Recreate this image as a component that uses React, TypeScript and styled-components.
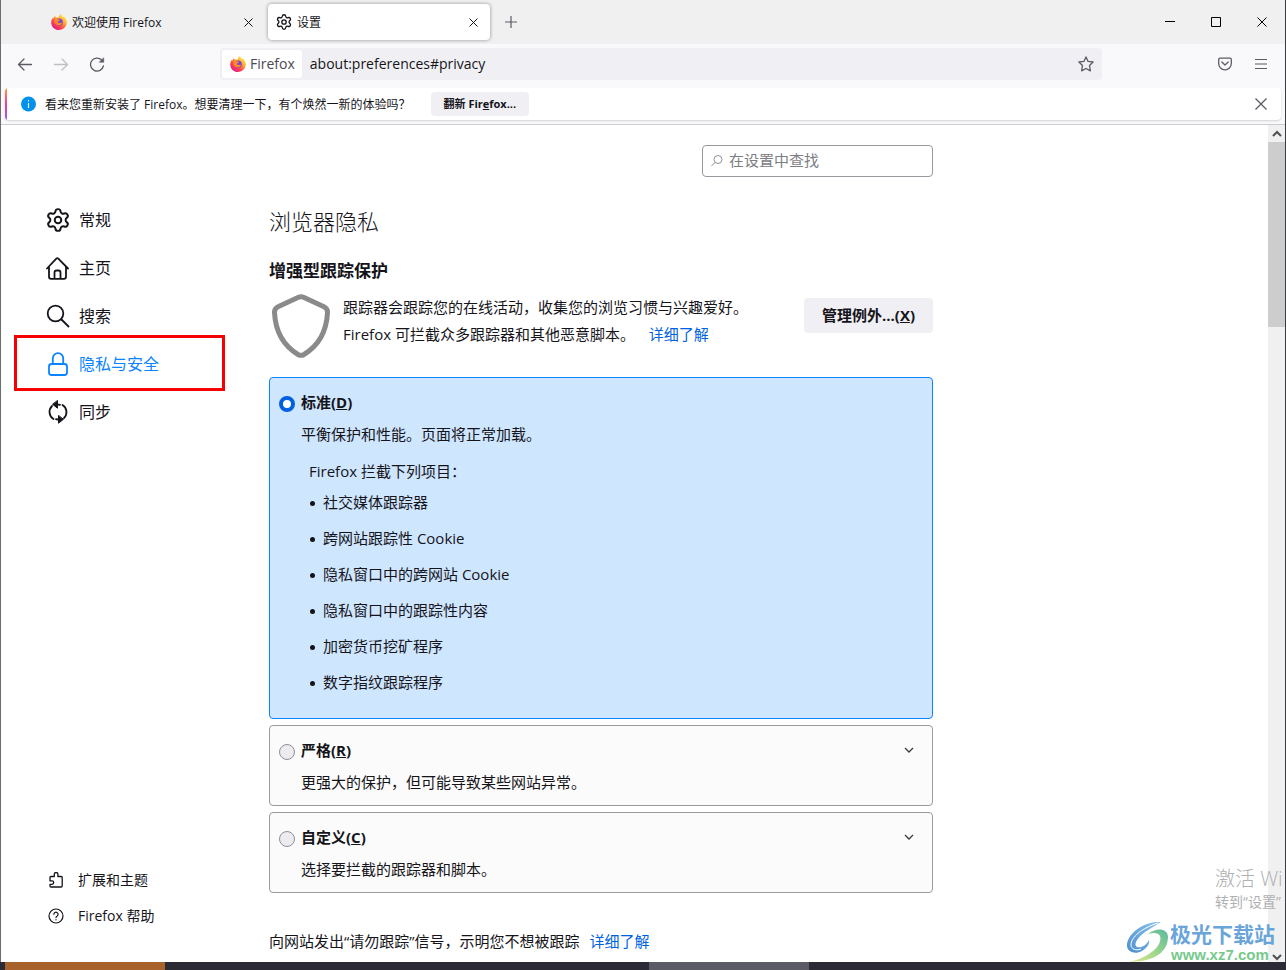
import React from "react";
import styled, { createGlobalStyle, css } from "styled-components";

const GlobalStyle = createGlobalStyle`
  * { box-sizing: border-box; }
  body {
    margin: 0;
    background: #2b2b36;
    color: #15141a;
    font-family: "Open Sans", "Noto Sans CJK SC", sans-serif;
    font-size: 15px;
  }
  button, input { font: inherit; color: inherit; }
  h1, h2, p, ul { margin: 0; padding: 0; }
`;

const Desktop = styled.div`
  min-height: 100vh;
  display: flex;
  flex-direction: column;
  position: relative;
  overflow: hidden;
`;

const Window = styled.div`
  flex: 1;
  display: flex;
  flex-direction: column;
  background: #fff;
  border-left: 1px solid #6d6d70;
  border-right: 1px solid #3a3b44;
`;

const Taskbar = styled.div`
  height: 8px;
  display: flex;
  padding-left: 5px;
  background: #2b2b36;
`;

const TaskbarItem = styled.div<{ $color: string; $gap?: boolean }>`
  width: 160px;
  background: ${(p) => p.$color};
  margin-left: ${(p) => (p.$gap ? "484px" : "0")};
`;

const IconButton = styled.button<{ $w?: number; $dim?: boolean }>`
  width: ${(p) => p.$w ?? 36}px;
  height: 32px;
  padding: 0;
  border: 0;
  background: none;
  display: flex;
  align-items: center;
  justify-content: center;
  color: ${(p) => (p.$dim ? "#bfbfc4" : "#5b5b66")};
`;

const TabStrip = styled.div`
  height: 44px;
  display: flex;
  align-items: center;
  background: #f0f0f0;
  padding-left: 42px;
`;

const Tab = styled.div<{ $active?: boolean }>`
  width: 222px;
  height: 36px;
  margin-right: 3px;
  padding: 0 0 0 8px;
  display: flex;
  align-items: center;
  gap: 5px;
  border-radius: 4px;
  font-size: 12px;
  ${(p) =>
    p.$active &&
    css`
      background: #fff;
      box-shadow: 0 0 3px 1px #b4b4bc;
    `}
`;

const TabTitle = styled.span`
  flex: 1;
  white-space: nowrap;
`;

const TabClose = styled(IconButton)`
  width: 34px;
  color: #15141a;
`;

const Fill = styled.div`
  flex: 1;
`;

const WindowButton = styled(IconButton)`
  width: 46px;
  color: #000;
`;

const NavBar = styled.div`
  height: 40px;
  display: flex;
  align-items: center;
  background: #f9f9fb;
  padding: 0 6px;
`;

const Spacer = styled.div`
  flex: 0 1 105px;
`;

const UrlBar = styled.div`
  flex: 1;
  height: 32px;
  display: flex;
  align-items: center;
  gap: 8px;
  padding-left: 2px;
  border-radius: 4px;
  background: #f0f0f4;
`;

const Identity = styled.div`
  height: 28px;
  display: flex;
  align-items: center;
  gap: 4px;
  padding: 0 7px 0 8px;
  border-radius: 3px;
  background: #fff;
  color: #4a4a52;
  font-size: 14px;
  line-height: 26px;
`;

const UrlInput = styled.input`
  flex: 1;
  min-width: 0;
  border: 0;
  padding: 0 0 2px;
  background: none;
  outline: 0;
  font-size: 14px;
`;

const NoticeArea = styled.div`
  background: #f9f9fb;
  border-bottom: 1px solid #cccccf;
  padding: 4px;
`;

const Notice = styled.div`
  height: 32px;
  display: flex;
  align-items: center;
  gap: 8px;
  padding: 0 2px 0 15px;
  background: linear-gradient(#ff9640, #e8409a 50%, #9059ff) left / 2px 100% no-repeat #fff;
  border-radius: 4px;
  box-shadow: 0 1px 2px rgba(58, 57, 68, 0.2);
  font-size: 12px;
`;

const NoticeButton = styled.button`
  height: 24px;
  margin-left: 12px;
  padding: 0 13px 2px;
  border: 0;
  border-radius: 4px;
  background: #f0f0f4;
  font-size: 11px;
  font-weight: 700;
`;

const Body = styled.div`
  flex: 1;
  display: flex;
`;

const Sidebar = styled.aside`
  width: 268px;
  flex: none;
  padding: 71px 44px 28px 34px;
  display: flex;
  flex-direction: column;
  justify-content: space-between;
`;

const SideLink = styled.a`
  display: flex;
  align-items: center;
  padding-bottom: 2px;
  text-decoration: none;
  color: #15141a;
  & > svg { margin-top: 2px; }
`;

const NavLink = styled(SideLink)<{ $current?: boolean }>`
  position: relative;
  height: 48px;
  padding-left: 11px;
  gap: 9px;
  font-size: 16px;
  ${(p) => p.$current && "color: #0a84ff;"}
`;

const Highlight = styled.span`
  position: absolute;
  inset: -5px 0 -3px -21px;
  border: 3px solid #f60000;
`;

const FootLink = styled(SideLink)`
  height: 36px;
  padding-left: 13px;
  gap: 14px;
  font-size: 14px;
`;

const Main = styled.main`
  flex: 0 1 664px;
  padding: 20px 0 6px;
  display: flex;
  flex-direction: column;
`;

const SearchBox = styled.label`
  align-self: flex-end;
  width: 231px;
  height: 32px;
  display: flex;
  align-items: center;
  gap: 6px;
  padding: 0 8px;
  border: 1px solid #98989f;
  border-radius: 4px;
  color: #8f8f96;
`;

const SearchInput = styled.input`
  flex: 1;
  min-width: 0;
  padding: 0 0 2px;
  border: 0;
  outline: 0;
  background: none;
  &::placeholder { color: #7d7d84; opacity: 1; }
`;

const PageTitle = styled.h1`
  margin-top: 27px;
  font-size: 22px;
  line-height: 34px;
  font-weight: 300;
`;

const SectionTitle = styled.h2`
  margin-top: 20px;
  font-size: 17px;
  line-height: 26px;
  font-weight: 700;
`;

const Intro = styled.div`
  display: flex;
  align-items: flex-start;
  margin: 10px 0 19px;
`;

const IntroText = styled.p`
  flex: 1;
  margin-left: 10px;
  line-height: 27px;
`;

const Link = styled.a`
  margin-left: 10px;
  color: #0061e0;
  text-decoration: none;
`;

const ExceptionsButton = styled.button`
  height: 35px;
  margin-top: 4px;
  padding: 0 18px 2px;
  border: 0;
  border-radius: 4px;
  background: #f0f0f4;
  font-weight: 700;
`;

const Card = styled.section<{ $selected?: boolean }>`
  margin-bottom: 6px;
  padding: 9px 9px ${(p) => (p.$selected ? 19 : 8)}px;
  border: 1px solid ${(p) => (p.$selected ? "#0a84ff" : "#9a9aa0")};
  border-radius: 4px;
  background: ${(p) => (p.$selected ? "#cfe6ff" : "#fbfbfb")};
`;

const CardHead = styled.div`
  display: flex;
  align-items: center;
  height: 32px;
`;

const CardLabel = styled.label`
  flex: 1;
  display: flex;
  align-items: center;
  gap: 6px;
  font-weight: 700;
  line-height: 20px;
`;

const LabelText = styled.span`
  padding-bottom: 2px;
`;

const Radio = styled.input`
  appearance: none;
  width: 16px;
  height: 16px;
  margin: 2px 0 0;
  border: 1px solid #8f8f9d;
  border-radius: 50%;
  background: #ececee;
  &:checked { border: 4px solid #0061e0; background: #fff; }
`;

const CardText = styled.p`
  margin-left: 22px;
  line-height: 30px;
`;

const ListTitle = styled.p`
  margin: 9px 0 0 30px;
  line-height: 26px;
`;

const BlockList = styled.ul`
  margin: -1px 0 0 31px;
  list-style: none;
`;

const BlockItem = styled.li`
  height: 36px;
  display: flex;
  align-items: center;
  gap: 8px;
  &::before {
    content: "";
    width: 5px;
    height: 5px;
    margin-top: 4px;
    border-radius: 50%;
    background: #15141a;
  }
`;

const Expand = styled(IconButton)`
  width: 28px;
  height: 28px;
  margin-bottom: 2px;
  color: #3a3a42;
`;

const SignalText = styled.p`
  margin-top: 27px;
  line-height: 30px;
`;

const Scrollbar = styled.div`
  width: 17px;
  margin-left: auto;
  display: flex;
  flex-direction: column;
  align-items: center;
  background: #f0f0f0;
  color: #505050;
`;

const ScrollThumb = styled.div`
  width: 17px;
  height: 185px;
  margin-bottom: auto;
  background: #cdcdcd;
`;

const ScrollEnd = styled.div<{ $last?: boolean }>`
  height: 17px;
  display: flex;
  align-items: ${(p) => (p.$last ? "flex-end" : "center")};
`;

const Activation = styled.div`
  position: absolute;
  right: 1px;
  bottom: 59px;
  width: 70px;
  overflow: hidden;
  white-space: nowrap;
  color: #b0b0b2;
  font-size: 14px;
  line-height: 18px;
`;

const ActivationTitle = styled.div`
  font-size: 20px;
  line-height: 28px;
  font-weight: 300;
`;

const SiteMark = styled.div`
  position: absolute;
  right: 11px;
  bottom: 7px;
  display: flex;
  align-items: center;
  gap: 1px;
`;

const SiteName = styled.div`
  font-size: 21px;
  line-height: 26px;
  font-weight: 700;
  color: #6aa5da;
`;

const SiteUrl = styled.div`
  padding-left: 1px;
  font-family: "Liberation Sans", sans-serif;
  font-size: 15px;
  line-height: 16px;
  font-weight: 700;
  color: #76c98c;
`;

const FirefoxLogo = ({ id }: { id: string }) => (
  <svg width="16" height="16" viewBox="0 0 16 16" aria-hidden="true">
    <defs>
      <linearGradient id={id} x1="0.85" y1="0.1" x2="0.2" y2="0.95">
        <stop offset="0" stopColor="#fff04a" />
        <stop offset="0.35" stopColor="#ffa62e" />
        <stop offset="0.65" stopColor="#ff4a4b" />
        <stop offset="1" stopColor="#e31587" />
      </linearGradient>
    </defs>
    <path d="M10 0c.3 1.6 1.3 2.300 2.400 3.300l.5-.9c1.900 1.600 3 3.800 2.900 6.200C15.600 12.900 12.200 16 8 16S.2 12.800.2 8.400c0-1.900.8-3.700 1.700-4.700l.3 1C2.600 3.500 3.300 2.600 4.200 2l.4 1.700c1-.3 2-.2 2.900.2C7.700 2.200 8.700.8 10 0z" fill={`url(#${id})`} />
    <circle cx="8.200" cy="8.200" r="3.600" fill="#7b45d9" />
    <path d="M3.300 5.200c1.600-.8 3-.5 4.100.3 1 .1 1.500.2 1.800.6-.4.8-1.500.9-2.100 1.400-.3 1 .5 1.500 1.500 1.500 1.100 0 1.600-.4 2.400-.1-.6 1.700-1.700 2.400-3.400 2.400-2.800 0-4.900-2.700-4.300-6.100z" fill="#ff8a24" />
  </svg>
);

const GearIcon = ({ size }: { size: number }) => (
  <svg width={size} height={size} viewBox="1 1 22 22" fill="none" stroke="currentColor" strokeWidth="1.800" strokeLinejoin="round" aria-hidden="true">
    <path d="M9.671 4.136a2.340 2.340 0 0 1 4.659 0 2.340 2.340 0 0 0 3.319 1.915 2.340 2.340 0 0 1 2.330 4.033 2.340 2.340 0 0 0 0 3.831 2.340 2.340 0 0 1-2.330 4.033 2.340 2.340 0 0 0-3.319 1.915 2.340 2.340 0 0 1-4.659 0 2.340 2.340 0 0 0-3.320-1.915 2.340 2.340 0 0 1-2.330-4.033 2.340 2.340 0 0 0 0-3.831A2.340 2.340 0 0 1 6.350 6.051a2.340 2.340 0 0 0 3.319-1.915" />
    <circle cx="12" cy="12" r="3" />
  </svg>
);

const CrossIcon = ({ size, width = 1 }: { size: number; width?: number }) => (
  <svg width={size} height={size} viewBox={`0 0 ${size} ${size}`} stroke="currentColor" strokeWidth={width} aria-hidden="true">
    <path d={`M.5.5 ${size - 0.5} ${size - 0.5}M${size - 0.5} .5.5 ${size - 0.5}`} />
  </svg>
);

const ArrowIcon = ({ flip }: { flip?: boolean }) => (
  <svg width="16" height="16" viewBox="0 0 16 16" fill="none" stroke="currentColor" strokeWidth="1.300" strokeLinecap="round" strokeLinejoin="round" aria-hidden="true">
    {flip ? <path d="M1.500 8.500h13M9 3 14.500 8.500 9 14" /> : <path d="M14.500 8.500h-13M7 3 1.500 8.500 7 14" />}
  </svg>
);

const ChevronIcon = ({ up, width = 1.3 }: { up?: boolean; width?: number }) => (
  <svg width="10" height="10" viewBox="0 0 10 10" fill="none" stroke="currentColor" strokeWidth={width} aria-hidden="true">
    <path d={up ? "M1 7l4-4 4 4" : "M1 3l4 4 4-4"} />
  </svg>
);

const navIcon = { width: 24, height: 24, viewBox: "0 0 24 24", fill: "none", stroke: "currentColor", strokeWidth: 1.8, strokeLinecap: "round", strokeLinejoin: "round" } as const;

const HomeIcon = () => (
  <svg {...navIcon} aria-hidden="true">
    <path d="M1 12.500 10.300 2.600q1-1 2 0L22 12.500M3 11v9.800q0 2 2 2h13q2 0 2-2V11M8.500 22.500v-6q0-2 2-2h2q2 0 2 2v6" />
  </svg>
);

const SearchIcon = () => (
  <svg {...navIcon} aria-hidden="true">
    <circle cx="9.500" cy="9.500" r="7.800" />
    <path d="m15.500 15.500 7 7" />
  </svg>
);

const LockIcon = () => (
  <svg {...navIcon} aria-hidden="true">
    <rect x="3" y="12" width="18" height="11" rx="2.500" />
    <path d="M6.800 11.500V6.300a5.200 5.200 0 0 1 10.400 0v5.200" />
  </svg>
);

const SyncIcon = () => (
  <svg {...navIcon} aria-hidden="true">
    <path d="M6 6A8.300 8.300 0 0 0 7.500 19M16.500 5A8.300 8.300 0 0 1 18 18" />
    <path d="M11.500.8v7.400L6.800 4.500zM12.500 15.800v7.400l4.700-3.700z" fill="currentColor" strokeWidth="1" />
    <path d="M10.500 4.300q2 0 3.500.5M13.500 19.700q-2 0-3.500-.5" />
  </svg>
);

const links = [
  { label: "常规", icon: <GearIcon size={24} /> },
  { label: "主页", icon: <HomeIcon /> },
  { label: "搜索", icon: <SearchIcon /> },
  { label: "隐私与安全", icon: <LockIcon />, current: true },
  { label: "同步", icon: <SyncIcon /> },
];

const blocked = ["社交媒体跟踪器", "跨网站跟踪性 Cookie", "隐私窗口中的跨网站 Cookie", "隐私窗口中的跟踪性内容", "加密货币挖矿程序", "数字指纹跟踪程序"];

export default function App() {
  return (
    <Desktop>
      <GlobalStyle />
      <Window>
        <TabStrip>
          <Tab>
            <FirefoxLogo id="fx-tab" />
            <TabTitle>欢迎使用 Firefox</TabTitle>
            <TabClose aria-label="关闭标签页"><CrossIcon size={9} /></TabClose>
          </Tab>
          <Tab $active>
            <GearIcon size={16} />
            <TabTitle>设置</TabTitle>
            <TabClose aria-label="关闭标签页"><CrossIcon size={9} /></TabClose>
          </Tab>
          <IconButton aria-label="新建标签页">
            <svg width="12" height="12" viewBox="0 0 12 12" stroke="currentColor" strokeWidth="1.200"><path d="M6 0v12M0 6h12" /></svg>
          </IconButton>
          <Fill />
          <WindowButton aria-label="最小化">
            <svg width="10" height="10" viewBox="0 0 10 10"><path d="M0 4h10v1H0z" /></svg>
          </WindowButton>
          <WindowButton aria-label="最大化">
            <svg width="10" height="10" viewBox="0 0 10 10" fill="none" stroke="currentColor"><path d="M.5.5h9v9h-9z" /></svg>
          </WindowButton>
          <WindowButton aria-label="关闭"><CrossIcon size={10} /></WindowButton>
        </TabStrip>

        <NavBar>
          <IconButton aria-label="后退"><ArrowIcon /></IconButton>
          <IconButton $dim aria-label="前进"><ArrowIcon flip /></IconButton>
          <IconButton aria-label="刷新">
            <svg width="16" height="16" viewBox="0 0 16 16" fill="none" stroke="currentColor" strokeWidth="1.300" strokeLinecap="round"><path d="M14.400 10A6.500 6.500 0 1 1 12.500 3.800l1 1" /><path d="M14.700 2v4.200h-4.200z" fill="currentColor" strokeWidth=".6" strokeLinejoin="round" /></svg>
          </IconButton>
          <Spacer />
          <UrlBar>
            <Identity><FirefoxLogo id="fx-url" /><span>Firefox</span></Identity>
            <UrlInput aria-label="地址" defaultValue="about:preferences#privacy" />
            <IconButton $w={32} aria-label="收藏">
              <svg width="16" height="16" viewBox="0 0 16 16" fill="none" stroke="currentColor" strokeWidth="1.300" strokeLinejoin="round"><path d="m8 .9 2.100 4.500 5 .6-3.600 3.500.9 5.300L8 12.500l-4.400 2.300.9-5.300L.9 6l5-.6z" /></svg>
            </IconButton>
          </UrlBar>
          <Spacer />
          <IconButton aria-label="保存到 Pocket">
            <svg width="14" height="14" viewBox="0 0 14 14" fill="none" stroke="currentColor" strokeWidth="1.300" strokeLinecap="round" strokeLinejoin="round"><path d="M2 1.200h10q1.300 0 1.300 1.300v4a6.300 6.300 0 0 1-12.600 0v-4Q.7 1.200 2 1.200zM3.800 5 7 8l3.200-3" /></svg>
          </IconButton>
          <IconButton aria-label="菜单">
            <svg width="12" height="12" viewBox="0 0 12 12" stroke="currentColor" strokeWidth="1.200"><path d="M0 1.500h12M0 6h12M0 10.500h12" /></svg>
          </IconButton>
        </NavBar>

        <NoticeArea>
          <Notice>
            <svg width="17" height="16" viewBox="0 0 16 16" aria-hidden="true"><circle cx="8" cy="8" r="7.500" fill="#0090ed" /><path d="M7.400 7h1.200v5H7.400zM7.400 4.300h1.200v1.300H7.400z" fill="#fff" /></svg>
            <span>看来您重新安装了 Firefox。想要清理一下，有个焕然一新的体验吗？</span>
            <NoticeButton>翻新 Fir<u>e</u>fox...</NoticeButton>
            <Fill />
            <IconButton aria-label="关闭通知"><CrossIcon size={12} width={1.3} /></IconButton>
          </Notice>
        </NoticeArea>

        <Body>
          <Sidebar>
            <nav>
              {links.map((l) => (
                <NavLink key={l.label} href="#" $current={l.current}>
                  {l.icon}
                  {l.label}
                  {l.current && <Highlight />}
                </NavLink>
              ))}
            </nav>
            <nav>
              <FootLink href="#">
                <svg width="16" height="16" viewBox="0 0 16 16" fill="none" stroke="currentColor" strokeWidth="1.300" strokeLinejoin="round"><path d="M2 6.800V5.500Q2 4.500 3 4.500h3.300V2.300a1.800 1.800 0 0 1 3.600 0v2.200h3.300q1 0 1 1v8.500q0 1-1 1H3q-1 0-1-1v-1.700h2a1.700 1.700 0 0 0 0-3.400H2z" /></svg>
                扩展和主题
              </FootLink>
              <FootLink href="#">
                <svg width="16" height="16" viewBox="0 0 16 16" fill="none" stroke="currentColor" strokeWidth="1.200" strokeLinecap="round"><circle cx="8" cy="8" r="7" /><path d="M5.900 6.300a2.100 2.100 0 1 1 3.300 1.700Q8 8.700 8 9.600M8 11.700v.1" /></svg>
                Firefox 帮助
              </FootLink>
            </nav>
          </Sidebar>

          <Main>
            <SearchBox>
              <svg width="12" height="12" viewBox="0 0 12 12" fill="none" stroke="currentColor" aria-hidden="true"><circle cx="7" cy="4.500" r="4" /><path d="M4.200 7.300.5 11" /></svg>
              <SearchInput type="search" placeholder="在设置中查找" aria-label="在设置中查找" />
            </SearchBox>
            <PageTitle>浏览器隐私</PageTitle>
            <SectionTitle>增强型跟踪保护</SectionTitle>
            <Intro>
              <svg width="64" height="64" viewBox="0 0 64 64" fill="none" stroke="#8a8a8a" strokeWidth="5" strokeLinejoin="round" aria-hidden="true"><path d="M29.500 3.300q2.500-1.200 5 0l20.500 9.400q3.700 1.800 3.500 6C57.500 38 49 52 35 60.500q-3 1.700-6 0C15 52 6.500 38 5.500 18.700q-.2-4.200 3.500-6z" /></svg>
              <IntroText>
                跟踪器会跟踪您的在线活动，收集您的浏览习惯与兴趣爱好。<br />
                Firefox 可拦截众多跟踪器和其他恶意脚本。 <Link href="#">详细了解</Link>
              </IntroText>
              <ExceptionsButton>管理例外...(<u>X</u>)</ExceptionsButton>
            </Intro>

            <Card $selected>
              <CardHead>
                <CardLabel><Radio type="radio" name="level" defaultChecked /><LabelText>标准(<u>D</u>)</LabelText></CardLabel>
              </CardHead>
              <CardText>平衡保护和性能。页面将正常加载。</CardText>
              <ListTitle>Firefox 拦截下列项目：</ListTitle>
              <BlockList>
                {blocked.map((b) => <BlockItem key={b}>{b}</BlockItem>)}
              </BlockList>
            </Card>
            <Card>
              <CardHead>
                <CardLabel><Radio type="radio" name="level" /><LabelText>严格(<u>R</u>)</LabelText></CardLabel>
                <Expand aria-label="展开严格"><ChevronIcon /></Expand>
              </CardHead>
              <CardText>更强大的保护，但可能导致某些网站异常。</CardText>
            </Card>
            <Card>
              <CardHead>
                <CardLabel><Radio type="radio" name="level" /><LabelText>自定义(<u>C</u>)</LabelText></CardLabel>
                <Expand aria-label="展开自定义"><ChevronIcon /></Expand>
              </CardHead>
              <CardText>选择要拦截的跟踪器和脚本。</CardText>
            </Card>
            <SignalText>向网站发出“请勿跟踪”信号，示明您不想被跟踪<Link href="#">详细了解</Link></SignalText>
          </Main>

          <Scrollbar>
            <ScrollEnd><ChevronIcon up width={2} /></ScrollEnd>
            <ScrollThumb />
            <ScrollEnd $last><ChevronIcon width={2} /></ScrollEnd>
          </Scrollbar>
        </Body>
      </Window>
      <Taskbar>
        <TaskbarItem $color="#a8622c" />
        <TaskbarItem $color="#5b5b66" $gap />
      </Taskbar>

      <Activation>
        <ActivationTitle>激活 Wi</ActivationTitle>
        转到“设置”
      </Activation>
      <SiteMark>
        <svg width="42" height="40" viewBox="0 0 42 40" aria-hidden="true">
          <defs>
            <linearGradient id="swoosh-blue" x1="0" y1="1" x2="1" y2="0"><stop offset="0" stopColor="#4d8fd0" /><stop offset="1" stopColor="#8cc4ee" /></linearGradient>
            <linearGradient id="swoosh-green" x1="0" y1="1" x2="1" y2="0"><stop offset="0" stopColor="#e6e88c" /><stop offset="0.500" stopColor="#9bd68c" /><stop offset="1" stopColor="#5cb8a0" /></linearGradient>
          </defs>
          <path d="M34 0C18-1 2 10 0 22c-1 8 8 11 15 7 5-3 8-7 7-11-3 6-8 8-12 7-4-2 0-9 8-15C24 6 29 3 34 0z" fill="url(#swoosh-blue)" />
          <path d="M31 1C15 6 4 15 4 23c0 4 5 6 10 4" fill="none" stroke="#fff" strokeWidth="1" />
          <path d="M21 12c8-7 20-6 20 3 0 12-9 21-26 24L2 40c13-3 25-9 30-18 4-8 0-13-11-10z" fill="url(#swoosh-green)" />
        </svg>
        <div>
          <SiteName>极光下载站</SiteName>
          <SiteUrl>www.xz7.com</SiteUrl>
        </div>
      </SiteMark>
    </Desktop>
  );
}
